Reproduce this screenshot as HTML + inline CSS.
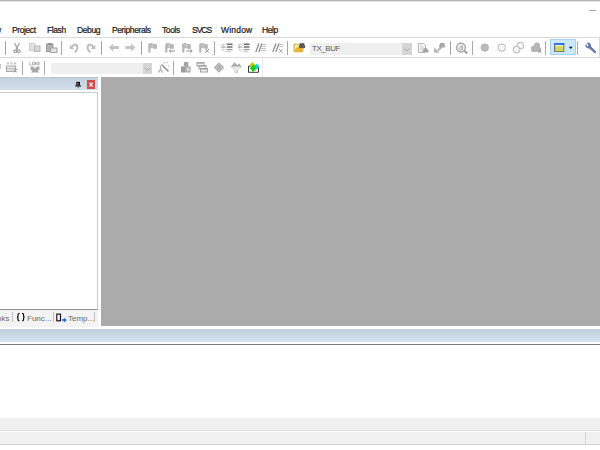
<!DOCTYPE html>
<html><head><meta charset="utf-8">
<style>
*{margin:0;padding:0;box-sizing:border-box}
html,body{width:600px;height:450px;overflow:hidden;background:#fff;font-family:"Liberation Sans",sans-serif}
.a{position:absolute}
.m{position:absolute;top:25px;font-size:8.5px;line-height:10px;color:#151515;white-space:nowrap;letter-spacing:-0.4px;-webkit-text-stroke:0.2px #151515}
.sep{position:absolute;width:1px;background:#a8a8a8}
.s1{top:41px;height:14px}
.s2{top:61px;height:14px}
.ic{position:absolute;width:14px;height:14px}
.tab{position:absolute;top:313.5px;font-size:8px;line-height:10px;color:#6a6a6a;white-space:nowrap}
</style></head><body>
<!-- top border -->
<div class="a" style="left:0;top:0;width:600px;height:1px;background:#b4b4b4"></div>
<div class="a" style="left:0;top:1px;width:600px;height:1px;background:#e2e2e2"></div>
<!-- minimize -->
<div class="a" style="left:589px;top:10px;width:7px;height:1px;background:#a2a2a2"></div>

<!-- menu -->
<div class="m" style="left:-16px">View</div>
<div class="m" style="left:12px">Project</div>
<div class="m" style="left:47px">Flash</div>
<div class="m" style="left:77px">Debug</div>
<div class="m" style="left:112px">Peripherals</div>
<div class="m" style="left:162px">Tools</div>
<div class="m" style="left:192px;letter-spacing:-1px">SVCS</div>
<div class="m" style="left:221px;letter-spacing:0.2px">Window</div>
<div class="m" style="left:262px">Help</div>

<!-- menu bottom line -->
<div class="a" style="left:0;top:37px;width:600px;height:1px;background:#d9d9d9"></div>
<!-- toolbar1 bottom -->
<div class="a" style="left:0;top:57px;width:600px;height:1px;background:#dadada"></div>
<!-- toolbar2 right edge -->
<div class="a" style="left:262px;top:58px;width:1px;height:19px;background:#e6e6e6"></div>

<!-- separators row 1 -->
<div class="sep s1" style="left:5px"></div>
<div class="sep s1" style="left:61px"></div>
<div class="sep s1" style="left:101px"></div>
<div class="sep s1" style="left:141px"></div>
<div class="sep s1" style="left:214px"></div>
<div class="sep s1" style="left:287px"></div>
<div class="sep s1" style="left:450px"></div>
<div class="sep s1" style="left:472px"></div>
<div class="sep s1" style="left:545px"></div>
<div class="sep s1" style="left:577px"></div>
<!-- separators row 2 -->
<div class="sep s2" style="left:22px"></div>
<div class="sep s2" style="left:44px"></div>
<div class="sep s2" style="left:173px"></div>

<!-- combo 1 -->
<div class="a" style="left:310px;top:43px;width:102px;height:12px;background:#efefef"></div>
<div class="a" style="left:402px;top:43px;width:10px;height:12px;background:#d5d5d5"></div>
<div class="a" style="left:312px;top:44px;font-size:8px;line-height:10px;color:#5e5e5e;letter-spacing:-0.45px">TX_BUF</div>
<!-- combo 2 -->
<div class="a" style="left:51px;top:63px;width:101px;height:11px;background:#efefef"></div>
<div class="a" style="left:143px;top:63px;width:9px;height:11px;background:#d5d5d5"></div>

<!-- highlighted button -->
<div class="a" style="left:550px;top:39px;width:26px;height:16px;background:#cce8ff;border:1px solid #a6d2f7"></div>

<!-- panel header -->
<div class="a" style="left:0;top:77px;width:98px;height:13px;background:linear-gradient(#c4d2e0,#d2deea);border-top:1px solid #b9c8d6"></div>
<div class="a" style="left:87px;top:80px;width:8px;height:9px;background:#d14a4c"></div>
<!-- panel content border -->
<div class="a" style="left:0;top:92px;width:98px;height:218px;border-right:1px solid #c9c9c9;border-top:1px solid #cdcdcd;border-bottom:1px solid #8e8e8e;background:#fff"></div>
<!-- tabs -->
<div class="a" style="left:0;top:310px;width:98px;height:17px;background:#f3f3f3"></div>
<div class="tab" style="left:-7.5px">ooks</div>
<div class="sep" style="left:12px;top:312px;height:10px;background:#c0c0c0"></div>
<div class="tab" style="left:27px">Func...</div>
<div class="sep" style="left:53px;top:312px;height:10px;background:#c0c0c0"></div>
<div class="tab" style="left:68px">Temp...</div>
<div class="sep" style="left:94px;top:312px;height:10px;background:#c0c0c0"></div>

<!-- gray workspace -->
<div class="a" style="left:101px;top:77px;width:499px;height:249px;background:#ababab"></div>

<!-- output header -->
<div class="a" style="left:0;top:329px;width:600px;height:13px;background:linear-gradient(#bfcddb,#d5e1ee)"></div>
<div class="a" style="left:0;top:344px;width:600px;height:1px;background:#7a7a7a"></div>

<!-- status bar -->
<div class="a" style="left:0;top:418px;width:600px;height:12px;background:#f0f0f0"></div>
<div class="a" style="left:0;top:430px;width:600px;height:1px;background:#e0e0e0"></div><div class="a" style="left:0;top:431px;width:600px;height:1px;background:#fafafa"></div>
<div class="a" style="left:0;top:432px;width:600px;height:12px;background:#f0f0f0"></div>
<div class="a" style="left:0;top:444px;width:600px;height:1px;background:#d2d2d2"></div>
<div class="a" style="left:585px;top:432px;width:1px;height:12px;background:#d4d4d4"></div><div class="a" style="left:599px;top:37px;width:1px;height:20px;background:#d9d9d9"></div>
<svg class="a" style="left:0;top:0;filter:blur(0.3px)" width="600" height="80" viewBox="0 0 600 80">
<!-- scissors -->
<g fill="none" stroke="#a4a4a4" stroke-width="1.3">
<path d="M14.6,43 L17.8,49.6 M19.4,43 L16.2,49.6"/>
<circle cx="15.3" cy="51.2" r="1.4"/><circle cx="18.7" cy="51.2" r="1.4"/>
</g>
<!-- copy -->
<rect x="29.5" y="43.5" width="5.5" height="7" fill="#e2e2e2" stroke="#cdcdcd" stroke-width="1"/>
<rect x="34.5" y="46" width="5.5" height="5.5" fill="#d6d6d6" stroke="#b6b6b6" stroke-width="1"/>
<!-- paste -->
<rect x="46.5" y="44" width="6.5" height="7.5" fill="#b4b4b4" stroke="#9a9a9a" stroke-width="1"/>
<rect x="48.5" y="43" width="3" height="2" fill="#8c8c8c"/>
<rect x="50.5" y="48" width="6.5" height="4.5" fill="#e2e2e2" stroke="#a2a2a2" stroke-width="1"/>
<!-- undo -->
<path d="M71.8,47.2 Q73.5,44.3 75.5,44.5 Q77.8,45.2 77.3,48.5 Q76.8,51 74.8,52.2" fill="none" stroke="#bcbcbc" stroke-width="2"/>
<path d="M69.8,44.6 L69.8,49 L74.2,49 Z" fill="#bcbcbc"/>
<!-- redo -->
<path d="M93.2,47.2 Q91.5,44.3 89.5,44.5 Q87.2,45.2 87.7,48.5 Q88.2,51 90.2,52.2" fill="none" stroke="#bcbcbc" stroke-width="2"/>
<path d="M95.2,44.6 L95.2,49 L90.8,49 Z" fill="#bcbcbc"/>
<!-- arrows -->
<path d="M108.6,47.5 L113.2,43.4 L113.2,46 L119,46 L119,49.1 L113.2,49.1 L113.2,51.6 Z" fill="#c4c4c4"/>
<path d="M135.6,47.5 L131,43.4 L131,46 L125.5,46 L125.5,49.1 L131,49.1 L131,51.6 Z" fill="#c4c4c4"/>
<!-- bookmarks -->
<g fill="#b6b6b6"><path d="M148.3,44 Q150.8,42.6 152.8,43.4 Q154.8,44.2 156.8,44.2 L157.10000000000002,48.6 Q154.8,49.4 152.8,48.3 Q151.5,47.8 150.5,48.6 L150.5,52.5 L148.3,52.5 Z"/><path d="M165.2,44 Q167.7,42.6 169.7,43.4 Q171.7,44.2 173.7,44.2 L174.0,48.6 Q171.7,49.4 169.7,48.3 Q168.39999999999998,47.8 167.39999999999998,48.6 L167.39999999999998,52.5 L165.2,52.5 Z"/><path d="M182.2,44 Q184.7,42.6 186.7,43.4 Q188.7,44.2 190.7,44.2 L191.0,48.6 Q188.7,49.4 186.7,48.3 Q185.39999999999998,47.8 184.39999999999998,48.6 L184.39999999999998,52.5 L182.2,52.5 Z"/><path d="M199.2,44 Q201.7,42.6 203.7,43.4 Q205.7,44.2 207.7,44.2 L208.0,48.6 Q205.7,49.4 203.7,48.3 Q202.39999999999998,47.8 201.39999999999998,48.6 L201.39999999999998,52.5 L199.2,52.5 Z"/></g>
<g fill="#cacaca"><rect x="151.3" y="44.5" width="2" height="3"/><rect x="168.2" y="44.5" width="2" height="3"/><rect x="185.2" y="44.5" width="2" height="3"/><rect x="202.2" y="44.5" width="2" height="3"/></g>
<g fill="none" stroke="#8e8e8e" stroke-width="1">
<path d="M175,51 L169.5,51 M171,49.3 L169.3,51 L171,52.7"/>
<path d="M186.5,51 L192,51 M190.5,49.3 L192.2,51 L190.5,52.7"/>
<path d="M205.5,49 L209,52.5 M209,49 L205.5,52.5"/>
</g>
<!-- indent -->
<g>
<path d="M226,43 V52.5" stroke="#b8b8b8" stroke-width="1" stroke-dasharray="1,1"/>
<rect x="227" y="43.5" width="5.5" height="1.6" fill="#6c6c6c"/>
<rect x="227" y="46.2" width="5.5" height="1.6" fill="#7a7a7a"/>
<rect x="227" y="48.9" width="5.5" height="1.3" fill="#9a9a9a"/><rect x="227" y="51.2" width="4" height="1" fill="#c4c4c4"/>
<rect x="221.5" y="44" width="3" height="1" fill="#c0c0c0"/>
<rect x="221.5" y="49.5" width="3" height="1" fill="#c0c0c0"/>
<path d="M221,47 L224.5,47 M223.3,45.8 L224.7,47 L223.3,48.2" stroke="#9a9a9a" stroke-width="1" fill="none"/>
<path d="M243,43 V52.5" stroke="#b8b8b8" stroke-width="1" stroke-dasharray="1,1"/>
<rect x="244" y="43.5" width="5.5" height="1.6" fill="#6c6c6c"/>
<rect x="244" y="46.2" width="5.5" height="1.6" fill="#7a7a7a"/>
<rect x="244" y="48.9" width="5.5" height="1.3" fill="#9a9a9a"/><rect x="244" y="51.2" width="4" height="1" fill="#c4c4c4"/>
<rect x="238.5" y="44" width="3" height="1" fill="#c0c0c0"/>
<rect x="238.5" y="49.5" width="3" height="1" fill="#c0c0c0"/>
<path d="M242,47 L238.5,47 M239.7,45.8 L238.3,47 L239.7,48.2" stroke="#9a9a9a" stroke-width="1" fill="none"/>
</g>
<!-- comment -->
<g stroke="#858585" stroke-width="1.2" fill="none">
<path d="M255.8,52 L259,43.5 M258.8,52 L262,43.5"/>
<path d="M272.8,52 L276,43.5 M275.8,52 L279,43.5"/>
</g>
<g fill="#c4c4c4">
<rect x="262" y="44" width="4" height="1"/><rect x="262" y="46" width="4" height="1"/><rect x="261" y="48" width="5" height="1"/><rect x="261" y="50" width="5" height="1"/>
<rect x="279" y="44" width="4" height="1"/><rect x="279" y="46" width="4" height="1"/>
</g>
<path d="M279,49 L282.5,52.5 M282.5,49 L279,52.5" stroke="#9a9a9a" stroke-width="1"/>
<!-- open folder w/ binoculars -->
<path d="M294,44 L297.5,44 L298.5,45 L302.5,45 L302.5,51.8 L294,51.8 Z" fill="#f2dc7a" stroke="#c0a040" stroke-width="0.8"/>
<rect x="295" y="45" width="2.6" height="6" fill="#faf0c0"/>
<path d="M296,47.6 L304,47.6 L302.8,51.8 L294.2,51.8 Z" fill="#ebb42c"/>
<g fill="#4a4a4a"><circle cx="300.6" cy="46.6" r="1.7"/><circle cx="303.6" cy="46.6" r="1.7"/><rect x="299.6" y="43.3" width="4.8" height="2.4"/></g>
<g fill="#9a9a9a"><rect x="300.2" y="46" width="0.9" height="0.9"/><rect x="303.2" y="46" width="0.9" height="0.9"/></g>
<!-- combo1 chevron -->
<path d="M404.6,48.4 L407.1,50.9 L409.6,48.4" fill="none" stroke="#a4a4a4" stroke-width="1"/>
<!-- find in files doc -->
<path d="M418.5,43.5 H423.5 L425.5,45.5 V52.5 H418.5 Z" fill="#f4f4f4" stroke="#b6b6b6" stroke-width="1"/>
<g fill="#cdcdcd"><rect x="420" y="45.5" width="3" height="1"/><rect x="420" y="47.5" width="4" height="1"/><rect x="420" y="49.5" width="2.5" height="1"/></g>
<g fill="#a2a2a2"><circle cx="424.2" cy="51" r="1.5"/><circle cx="427.2" cy="51" r="1.5"/><rect x="423.6" y="48.3" width="3.6" height="2"/></g>
<!-- arrow binoculars -->
<path d="M441.5,45.5 L443,47 L438.5,51.5 L437,50 Z" fill="#b6b6b6"/>
<path d="M434,52.8 L434,47.3 L439.5,52.8 Z" fill="#b6b6b6"/>
<g fill="#a6a6a6"><circle cx="440.6" cy="46" r="1.6"/><circle cx="443.6" cy="46" r="1.6"/><rect x="439.8" y="43" width="4.6" height="2.2"/></g>
<!-- magnifier -->
<circle cx="461" cy="47.6" r="4.4" fill="#f4f4f4" stroke="#a8a8a8" stroke-width="1.4"/>
<path d="M464.3,50.8 L467.4,53.4" stroke="#a0a0a0" stroke-width="2"/>
<path d="M462.2,45 V50.2 M462.2,48.3 A1.5,1.8 0 1 0 462.2,48.4" fill="none" stroke="#a4a4a4" stroke-width="1"/>
<!-- circles -->
<circle cx="484.8" cy="47.6" r="3.8" fill="#bababa" stroke="#acacac" stroke-width="0.7"/>
<circle cx="501.8" cy="47.6" r="3.7" fill="#f6f6f6" stroke="#b4b4b4" stroke-width="1"/>
<circle cx="520.3" cy="45.6" r="3.4" fill="#f6f6f6" stroke="#b4b4b4" stroke-width="1"/>
<circle cx="516.5" cy="49.6" r="3.4" fill="#f6f6f6" stroke="#b4b4b4" stroke-width="1"/>
<!-- cloud -->
<g fill="#b4b4b4"><circle cx="537" cy="45.5" r="3"/><circle cx="534" cy="49" r="3.2"/><circle cx="538.3" cy="49.5" r="2.7"/></g>
<path d="M538.5,50 L541.5,52.8 M541.5,50 L538.5,52.8" stroke="#9a9a9a" stroke-width="1"/>
<!-- window icon -->
<rect x="554.5" y="43.5" width="9.3" height="8" fill="#e6e8f0" stroke="#66707e" stroke-width="1"/>
<rect x="554" y="43" width="10.3" height="2" fill="#3a70d8"/>
<rect x="556" y="46.3" width="7" height="4.8" fill="#d6de3c"/>
<rect x="556" y="48.2" width="7" height="1" fill="#c8cc9a"/>
<rect x="555" y="46" width="1" height="5.2" fill="#b8b8b8"/>
<path d="M568.8,46.8 L572.8,46.8 L570.8,49 Z" fill="#111"/>
<!-- wrench -->
<path d="M586,43.5 A3.2,3.2 0 0 0 589.2,48.5 L594.2,52.8 A1,1 0 0 0 595.8,51.2 L591,46.5 A3.2,3.2 0 0 0 586.5,42.8 L588.6,45 L588,46 L587,46.3 Z" fill="#6478ac"/>

<!-- ROW 2 -->
<path d="M0,64 L1,64 L1,69 L0,69 Z" fill="#c8c8c8"/>
<!-- batch build -->
<path d="M7,62.3 L8,64.3 L9,62.3 M10.5,62.3 L11.5,64.3 L12.5,62.3 M14,62.3 L15,64.3 L16,62.3" fill="none" stroke="#b4b4b4" stroke-width="0.9"/>
<rect x="6.5" y="66" width="9" height="5.5" fill="#e8e8e8" stroke="#aaaaaa" stroke-width="1"/>
<rect x="7" y="68.3" width="8" height="1" fill="#bcbcbc"/><rect x="10.5" y="66.5" width="1" height="4.5" fill="#cccccc"/>
<path d="M13.5,69 L17,72.5 M17,69 L13.5,72.5" stroke="#999" stroke-width="1"/>
<!-- LOAD -->
<path d="M29.8,62 V65 H31.6 M32.5,62.2 H34.3 V64.8 H32.5 Z M35,65 L36,62 L37,65 M35.5,64 H36.5 M38,62.2 V64.8 H39 Q40.2,63.5 39,62.2 Z" fill="none" stroke="#a0a0a0" stroke-width="0.8"/>
<path d="M30.5,66.5 L33,66.5 L35,68.5 L37,66.5 L39.5,66.5 L39.5,69.5 L37.5,71 L39.5,72.5 L30.5,72.5 L32.5,71 L30.5,69.5 Z" fill="#a8a8a8"/>
<!-- combo2 chevron -->
<path d="M145.1,67.8 L147.6,70.3 L150.1,67.8" fill="none" stroke="#a4a4a4" stroke-width="1"/>
<!-- wand -->
<path d="M161.5,64.5 L168.5,71.5" stroke="#8c8c8c" stroke-width="1.4"/>
<g fill="#b4b4b4"><rect x="163.5" y="62.5" width="1.2" height="1.2"/><rect x="166.3" y="62" width="1.8" height="1"/><rect x="167.8" y="65.3" width="1.2" height="1.2"/></g>
<path d="M160.5,65.5 V69.5 L158.3,72.6 M160.5,69.5 L162.8,72.6" stroke="#b4b4b4" stroke-width="1.3" fill="none"/>
<!-- 3 boxes -->
<rect x="183.8" y="62" width="4.6" height="4.6" rx="0.8" fill="#a2a2a2"/>
<rect x="181" y="66.4" width="4.8" height="6.1" fill="#9c9c9c"/>
<rect x="185.8" y="66.4" width="4.8" height="6.1" fill="#a8a8a8"/>
<rect x="186.8" y="67.8" width="2.8" height="3.4" fill="#dedede"/>
<!-- stacked windows -->
<g fill="#f2f2f2" stroke="#9a9a9a" stroke-width="0.9">
<rect x="197" y="62.5" width="7" height="3.5"/>
<rect x="199" y="65.5" width="7" height="3.5"/>
<rect x="200.5" y="68.5" width="7" height="3.5"/>
</g>
<g fill="#a8a8a8"><rect x="197" y="62.5" width="7" height="1.2"/><rect x="199" y="65.5" width="7" height="1.2"/><rect x="200.5" y="68.5" width="7" height="1.2"/></g>
<!-- diamond -->
<path d="M219,62.3 L224.2,67.5 L219,72.7 L213.8,67.5 Z" fill="#b0b0b0"/>
<g fill="#d8d8d8"><rect x="218.4" y="64.3" width="1.2" height="1.2"/><rect x="216" y="66.9" width="1.2" height="1.2"/><rect x="220.8" y="66.9" width="1.2" height="1.2"/><rect x="218.4" y="69.4" width="1.2" height="1.2"/></g>
<!-- funnel -->
<path d="M231,66.5 L234.5,62.2 L237.3,65 L239.2,63.6 L241.6,66.5 Z" fill="#acacac"/>
<path d="M231,66.5 L241.6,66.5 L237.6,69.8 L237.6,72.6 L235,72.6 L235,69.8 Z" fill="#ececec" stroke="#b8b8b8" stroke-width="0.7"/>
<!-- pack installer -->
<path d="M248.5,66 L248.5,72.3 L258.5,72.3 L258.5,66 Z" fill="#fff" stroke="#3a3a3a" stroke-width="1"/>
<path d="M252.5,62 L255.8,65.2 L252.5,68.5 L249.2,65.2 Z" fill="#c4cc10"/>
<path d="M256.7,63.6 L259.4,66.5 L256.7,69.6 L254,66.5 Z" fill="#18d4e0"/>
<path d="M253.3,64.7 L256.9,68.3 L253.3,71.9 L249.7,68.3 Z" fill="#18cc18"/>
</svg>
<svg class="a" style="left:0;top:76px" width="100" height="260" viewBox="0 76 100 260">
<!-- pin -->
<rect x="76.2" y="81.8" width="3.8" height="3.8" fill="#111"/>
<rect x="77.2" y="82.6" width="1.2" height="2.4" fill="#777"/>
<rect x="75.2" y="85.4" width="5.8" height="1.1" fill="#111"/>
<rect x="77.6" y="86.5" width="1" height="1.8" fill="#555"/>
<!-- close X -->
<path d="M89.3,82.6 L92.7,86.6 M92.7,82.6 L89.3,86.6" stroke="#fff" stroke-width="1.1"/>
<!-- { } -->
<path d="M19.4,313.4 Q18,313.4 18,314.9 V316.3 Q18,317.1 17,317.1 Q18,317.1 18,317.9 V319.4 Q18,320.9 19.4,320.9 M22.2,313.4 Q23.6,313.4 23.6,314.9 V316.3 Q23.6,317.1 24.6,317.1 Q23.6,317.1 23.6,317.9 V319.4 Q23.6,320.9 22.2,320.9" fill="none" stroke="#000" stroke-width="1.1"/>
<!-- [] -->
<rect x="56.8" y="314.1" width="3.7" height="6.7" fill="none" stroke="#111" stroke-width="1.15"/>
<path d="M62,320 L65,320 M63.8,318.6 L65.8,320 L63.8,321.6" fill="none" stroke="#2a6ae0" stroke-width="1.4"/>
</svg>
</body></html>
